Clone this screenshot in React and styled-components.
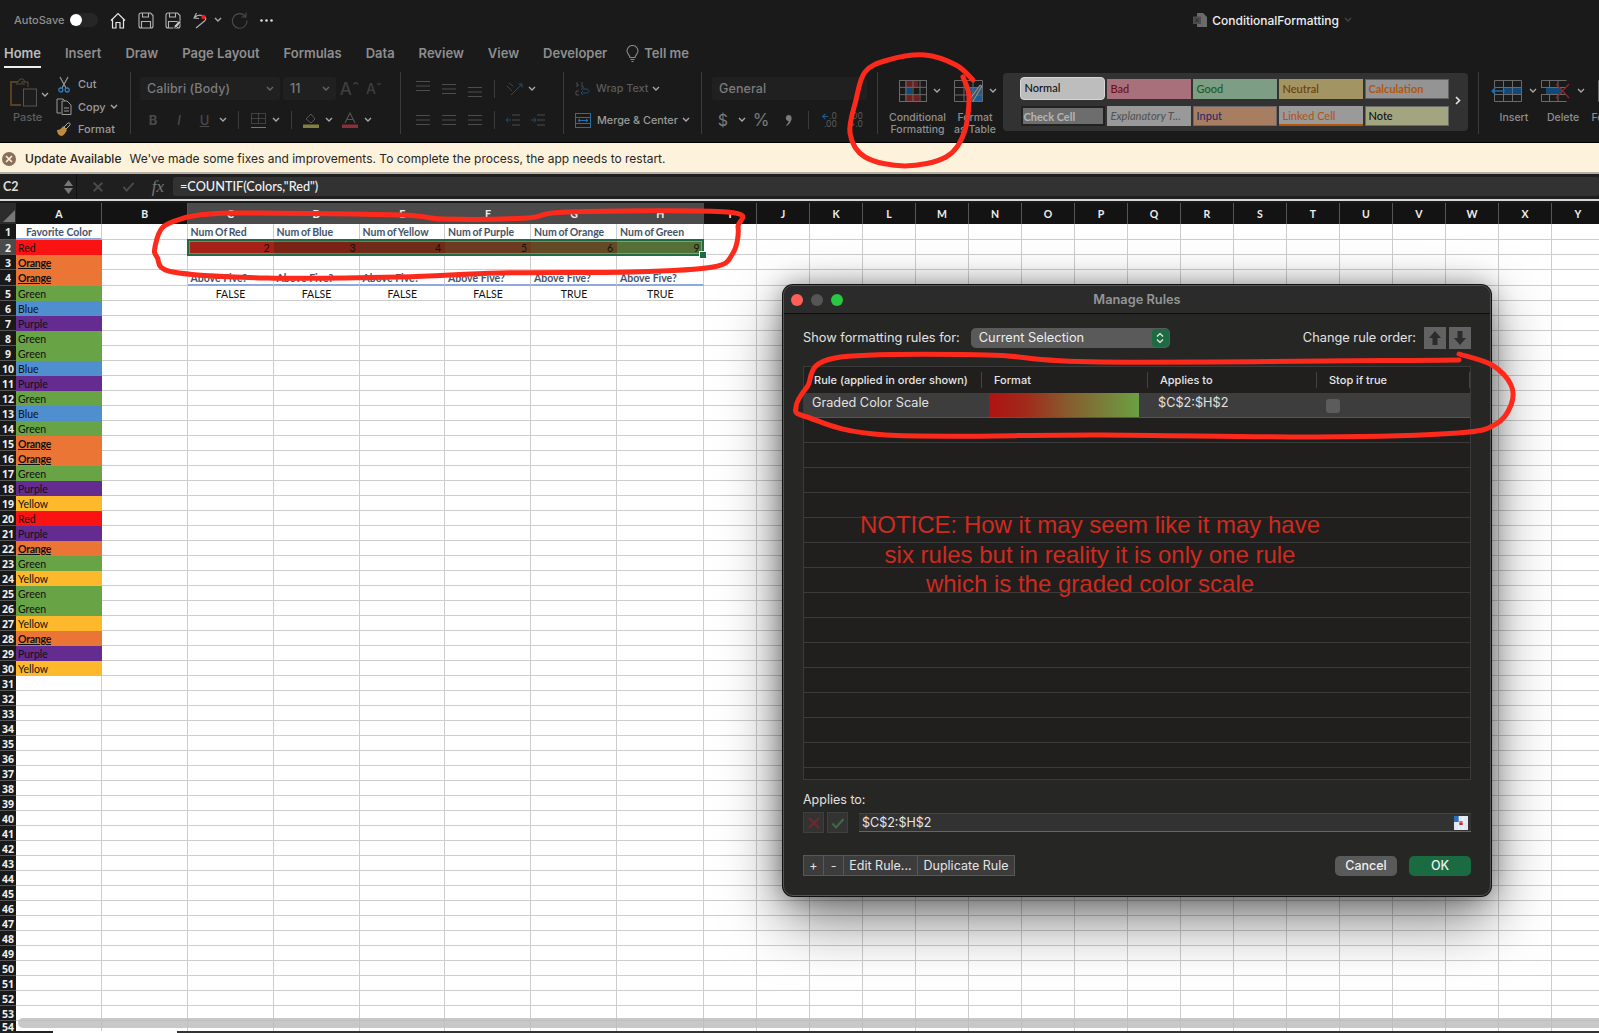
import React from 'react';
import styled, { createGlobalStyle } from 'styled-components';

const Global = createGlobalStyle`
  html, body { margin: 0; padding: 0; background: #fff; overflow: hidden; }
  * { box-sizing: border-box; }
`;
const UI = `Inter, "Liberation Sans", sans-serif`;
const CAL = `Lato, "Liberation Sans", sans-serif`;

const Page = styled.div`position: relative; width: 1599px; height: 1033px; overflow: hidden; display: flex; flex-direction: column; font-family: ${UI}; background: #1a1a1a;`;
const TitleBar = styled.div`height: 36px; flex: none; display: flex; align-items: center; padding: 4px 247px 0 14px;`;
const AutoSave = styled.span`font-size: 11px; font-weight: 500; color: #8f8f8f; width: 56px;`;
const Toggle = styled.div`position: relative; width: 28px; height: 14px; border-radius: 7px; background: #262626; margin-right: 11px;`;
const Knob = styled.div`position: absolute; left: 0; top: 1px; width: 12px; height: 12px; border-radius: 50%; background: #fff;`;
const QuickSlot = styled.div`width: ${p => p.$w}px; margin-left: ${p => p.$ml || 0}px; display: flex; justify-content: center; align-items: center; flex: none;`;
const DocTitle = styled.div`margin-left: auto; display: flex; align-items: center; gap: 5px; color: #eee; font-size: 12px; font-weight: 500;`;
const Tabs = styled.div`height: 34px; flex: none; display: flex; align-items: flex-start; padding: 8px 0 0 4px; gap: 24px;`;
const Tab = styled.div`position: relative; font-size: 13px; font-weight: 600; line-height: 18px; margin-left: ${p => p.$ml || 0}px; color: ${p => p.$on ? '#bdbdbd' : '#8e8e8e'}; display: flex; align-items: center; gap: 5px;
  ${p => p.$on && `&::after { content: ''; position: absolute; left: 0; right: 0; bottom: -6px; height: 2px; background: #eee; }`}`;
const Ribbon = styled.div`height: 72px; flex: none; display: flex; align-items: flex-start; padding-top: 2px; overflow: hidden;`;
const Group = styled.div`width: ${p => p.$w}px; height: 62px; flex: none; border-right: ${p => p.$last ? 'none' : '1px solid #3b3b3b'}; display: ${p => p.$row ? 'flex' : 'block'}; padding-left: ${p => p.$pl || 0}px;`;
const PasteCol = styled.div`width: 56px; flex: none; padding: 6px 0 0 10px; position: relative;`;
const PasteLabel = styled.div`font-size: 11px; font-weight: 500; color: #5f5f5f; margin-top: 3px; margin-left: 3px;`;
const ChevAt = styled.span`position: absolute; left: 41px; top: 20px;`;
const SideCol = styled.div`display: flex; flex-direction: column; padding-top: 1px;`;
const SideRow = styled.div`height: 22.4px; flex: none; display: flex; align-items: center; font-size: 11px; font-weight: 500; color: #9a9a9a; gap: 6px;`;
const SideChev = styled.span`margin-left: -2px;`;
const SideIcon = styled.div`width: 16px; display: flex; justify-content: center;`;
const Rows = styled.div`display: flex; flex-direction: column; gap: 9px; padding-top: 5px;`;
const ToolRow = styled.div`height: ${p => p.$h || 23}px; display: flex; align-items: center;`;
const Slot = styled.div`width: ${p => p.$w}px; flex: none; display: flex; justify-content: center; align-items: center; color: ${p => p.$c || '#4a4a4a'}; font-size: ${p => p.$fs || 13}px; font-weight: ${p => p.$fw || 500};`;
const VLine = styled.div`width: 1px; height: 18px; background: #3b3b3b;`;
const Combo = styled.div`width: ${p => p.$w}px; height: 23px; flex: none; background: #202020; border-radius: 3px; margin-right: ${p => p.$mr || 0}px; display: flex; align-items: center; justify-content: space-between; padding: 0 6px 0 7px; font-size: 12.5px; font-weight: 500; color: #7c7c7c; letter-spacing: .1px;`;
const ToolText = styled.div`font-size: 10.8px; font-weight: 500; color: ${p => p.$dim ? '#5a5a5a' : '#9a9a9a'}; margin: 0 4px 0 6px;`;
const DecStack = styled.div`font-size: 8.5px; line-height: 8.5px; color: #5c5c5c; text-align: right; font-weight: 400;`;
const DecArrow = styled.span`color: #1e5f94; font-weight: 700;`;
const LargeCol = styled.div`width: ${p => p.$w}px; flex: none; display: flex; flex-direction: column; align-items: center; padding-top: 8px; margin-left: ${p => p.$ml || 0}px;`;
const LargeIconRow = styled.div`display: flex; align-items: center; gap: 6px; height: 22px; padding-left: ${p => p.$pl || 0}px;`;
const LargeLabel = styled.div`font-size: 10.5px; font-weight: 500; line-height: 12px; color: #8f8f8f; text-align: center; margin-top: 10px; white-space: nowrap;`;
const Gallery = styled.div`width: 465.5px; height: 58px; margin: 1px 0 0 5.5px; background: #323232; border-radius: 4px; padding: 6px 0 0 18px; display: grid; grid-template-columns: repeat(5, 84px); grid-auto-rows: 20px; column-gap: 2px; row-gap: 7px; position: relative; flex: none;`;
const StyleCell = styled.div`font-family: ${CAL}; font-size: 11px; font-weight: ${p => p.$b ? 700 : 500}; font-style: ${p => p.$i ? 'italic' : 'normal'}; line-height: 18px; padding-left: ${p => p.$border ? 3 : 4}px; background: ${p => p.$bg}; color: ${p => p.$c}; border: ${p => p.$border || 'none'}; border-bottom: ${p => p.$bb || ''}; ${p => p.$border ? '' : 'line-height: 20px;'} white-space: nowrap; overflow: hidden;`;
const NormalCell = styled(StyleCell)`margin: -2px 0 -1px -1px; border: 1.5px solid #d6d6d6; border-radius: 4px; line-height: 20px; padding-left: 4px;`;
const CheckCell = styled(StyleCell)`padding-left: 1px;`;
const GalleryMore = styled.div`position: absolute; right: 7px; top: 23px; color: #ddd;`;
const Banner = styled.div`height: 32px; flex: none; background: #fdf3dd; border-top: 1px solid #000; border-bottom: 2px solid #b5afa3; display: flex; align-items: center; padding: 2px 0 0 2px; font-size: 12px; color: #262626; font-weight: 400;`;
const BannerDot = styled.div`width: 14px; height: 14px; border-radius: 50%; background: #8a6e55; display: flex; align-items: center; justify-content: center; color: #fdf3dd; margin-right: 9px;`;
const BannerStrong = styled.span`font-weight: 500; margin-right: 8px;`;
const FormulaBar = styled.div`height: 27px; flex: none; background: #1f1f1f; display: flex; align-items: center; border-bottom: 2px solid #d8d8d8;`;
const NameBox = styled.div`width: 77px; height: 100%; flex: none; display: flex; align-items: center; justify-content: space-between; padding: 0 3px 0 3px; color: #ddd; font-family: ${CAL}; font-size: 12.5px; font-weight: 700; border-right: 1px solid #111;`;
const Stepper = styled.div`display: flex; flex-direction: column; gap: 2px;`;
const FxSlot = styled.div`width: 30px; flex: none; margin-left: 6px; display: flex; justify-content: center; color: #777; font-family: "Liberation Serif", serif; font-style: italic; font-size: 17px;`;
const FormulaInput = styled.div`flex: 1; height: 19px; background: #323232; border-radius: 2px; color: #f2f2f2; font-family: ${CAL}; font-size: 12.7px; font-weight: 500; line-height: 19px; padding-left: 7px;`;
const Sheet = styled.div`position: relative; flex: 1; margin-top: 1px; background: #fff; overflow: hidden; border-top: 1px solid #1a1a1a;`;
const GridWrap = styled.div`display: grid; height: 100%; overflow: hidden; align-content: start;
  grid-template-columns: 16px 86px 85.5px 86px 86px 85.5px 86px 86px 86.5px repeat(17, 53px);
  grid-template-rows: 21px 16px 15px 15px 16px repeat(49, 15px); font-family: ${CAL};`;
const Corner = styled.div`background: #2c2c2c; position: relative; overflow: hidden; &::after { content: ''; position: absolute; right: 1px; bottom: 2px; border-style: solid; border-width: 0 0 12px 12px; border-color: transparent transparent #777 transparent; }`;
const ColHead = styled.div`background: ${p => p.$sel ? '#4b4b4b' : '#131313'}; color: #eee; display: flex; align-items: center; justify-content: center; padding-left: 1px; font-size: 10.5px; font-weight: 700; border-right: 1px solid ${p => p.$sel ? '#4b4b4b' : '#555'};`;
const RowHead = styled.div`background: ${p => p.$sel ? '#4b4b4b' : '#191919'}; color: #eee; display: flex; align-items: center; justify-content: center; overflow: hidden; padding-top: 1px; font-size: 10.5px; font-weight: 700; border-bottom: 1px solid #555; font-family: "Open Sans", sans-serif; white-space: nowrap;`;
const Cell = styled.div`background: ${p => p.$bg || '#fff'}; border-right: 1px solid ${p => p.$bg ? 'transparent' : '#cdcdcd'}; border-bottom: ${p => p.$bb || `1px solid ${p.$bg ? 'transparent' : '#cdcdcd'}`}; font-size: 10.5px; line-height: 14px; color: ${p => p.$c || '#111'}; font-weight: ${p => p.$w || 400}; text-align: ${p => p.$a || 'left'}; word-spacing: ${p => p.$ws || 0}px; letter-spacing: ${p => p.$ls || 0}px; padding: 1px ${p => p.$a === 'right' ? 3 : 2}px 0 ${p => p.$bg && p.$a !== 'right' ? 2 : 3}px; overflow: hidden; white-space: nowrap; text-decoration: ${p => p.$u ? 'underline' : 'none'};`;
const Selection = styled.div`position: absolute; left: 187px; top: 36px; width: 517px; height: 17px; border: 2px solid #1f6b43; box-shadow: inset 0 0 0 0.5px rgba(255,255,255,.6); pointer-events: none;`;
const Handle = styled.div`position: absolute; right: -4px; bottom: -4px; width: 6px; height: 6px; background: #1f6b43; outline: 1px solid #fff;`;
const ScrollThumb = styled.div`position: absolute; left: 18px; right: -10px; top: 815px; height: 10px; border-radius: 5px 0 0 5px; background: rgba(188,188,188,.82);`;
const BottomEdge = styled.div`position: absolute; left: 0; right: 0; bottom: 0; height: 2px; display: flex;`;
const EdgeBar = styled.div`height: 2px; background: ${p => p.$c}; width: ${p => p.$w ? p.$w + 'px' : 'auto'}; flex: ${p => p.$w ? 'none' : 1};`;

const Dialog = styled.div`position: absolute; left: 783px; top: 285px; width: 708px; height: 611px; background: #262625; border-radius: 10px; border: 1px solid #555; box-shadow: 0 0 0 1px #111, 0 22px 60px rgba(0,0,0,.55), 0 0 24px rgba(0,0,0,.35); display: flex; flex-direction: column; color: #e2e2e2; font-size: 12.8px;`;
const DialogTitle = styled.div`position: relative; height: 28px; flex: none; display: flex; align-items: center; justify-content: center; border-bottom: 1px solid #0d0d0d; background: #2b2b2b; border-radius: 10px 10px 0 0; color: #959595; font-size: 12.8px; font-weight: 600;`;
const Lights = styled.div`position: absolute; left: 7px; top: 8px; display: flex; gap: 8px;`;
const Light = styled.div`width: 12px; height: 12px; border-radius: 50%; background: ${p => p.$c};`;
const DialogBody = styled.div`flex: 1; padding: 12px 19px 0 19px; display: flex; flex-direction: column; position: relative;`;
const TopRow = styled.div`height: 23px; display: flex; align-items: center; flex: none;`;
const SelectBox = styled.div`width: 199px; height: 20px; margin-left: 11px; background: #5a5a5a; border-radius: 5px; display: flex; align-items: center; justify-content: space-between; padding-left: 8px; color: #eee; font-size: 12.8px; overflow: hidden; font-weight: 400;`;
const SelectArrow = styled.div`width: 17px; height: 18px; margin-right: 1px; border-radius: 4px; background: #1d6b41; display: flex; align-items: center; justify-content: center;`;
const OrderLabel = styled.div`margin-left: auto; margin-right: 8px;`;
const OrderBtn = styled.div`width: 22px; height: 22px; background: #626262; margin-left: ${p => p.$ml || 0}px; display: flex; align-items: center; justify-content: center;`;
const RuleTable = styled.div`height: 414px; margin-top: 17px; border: 1px solid #3a3a3a; background: #201f1e; overflow: hidden; flex: none;`;
const RuleHead = styled.div`height: 26px; display: grid; grid-template-columns: 178px 166px 169px 153px; align-items: center; font-size: 11px; font-weight: 500; color: #e6e6e6;`;
const RuleHeadCell = styled.div`height: 16px; line-height: 16px; padding-left: ${p => p.$pl}px; border-right: 1px solid #444;`;
const RuleRow = styled.div`height: 25px; background: #3d3d3d; display: grid; grid-template-columns: 185px 150px 186.5px 1fr; align-items: center; border-bottom: 1px solid #555; font-size: 12.7px;`;
const RuleCell = styled.div`padding-left: ${p => p.$pl}px; padding-bottom: 5px;`;
const GradientBar = styled.div`height: 24px; background: linear-gradient(90deg, #b01212 0%, #a02a1c 25%, #85602f 55%, #6ba043 100%);`;
const RuleCheck = styled.div`width: 14px; height: 14px; background: #5c5c5c; border-radius: 3px; margin: 2px 0 0 0;`;
const EmptyRow = styled.div`height: 25px; border-bottom: 1px solid #3a3a3a;`;
const AppliesLabel = styled.div`margin-top: 13px; line-height: 14px; font-size: 12.5px;`;
const AppliesRow = styled.div`display: flex; align-items: center; height: 21px; margin-top: 5px; gap: 3px;`;
const SquareBtn = styled.div`width: 21px; height: 21px; background: #333; border: 1px solid #3f3f3f; display: flex; align-items: center; justify-content: center;`;
const RangeInput = styled.div`flex: 1; height: 19px; margin-left: 8px; background: #323232; border-bottom: 1px solid #666; border-top: 1px solid #444; padding: 0 3px; display: flex; align-items: center; justify-content: space-between; font-size: 12.5px; color: #e6e6e6;`;
const ActionRow = styled.div`display: flex; align-items: center; margin-top: 22px; height: 21px;`;
const ActionBtn = styled.div`height: 21px; width: ${p => p.$w}px; background: #3c3c3c; border: 1px solid #585858; margin-left: ${p => p.$first ? 0 : -1}px; display: flex; align-items: center; justify-content: center; font-size: 12.5px; color: #e4e4e4;`;
const PushBtn = styled.div`height: 20px; width: 62px; border-radius: 5px; background: ${p => p.$bg}; margin-left: ${p => p.$ml}px; display: flex; align-items: center; justify-content: center; font-size: 12.5px; font-weight: 500; color: #eee;`;
const Notice = styled.div`position: absolute; left: 56px; top: 196px; width: 500px; text-align: center; font-family: "Liberation Sans", sans-serif; font-size: 24px; line-height: 29.5px; color: #cf2a1e; pointer-events: none;`;
const Scribble = styled.svg`position: absolute; left: 0; top: 0; pointer-events: none;`;

const Ico = styled.svg`display: block; flex: none;`;
const Chev = ({ c = '#a8a8a8' }) => <Ico width="8" height="6" viewBox="0 0 8 6"><path d="M1 1l3 3 3-3" fill="none" stroke={c} strokeWidth="1.4" /></Ico>;
const Lines = ({ y = 0 }) => <Ico width="14" height="16" viewBox="0 0 14 16">{[0, 1, 2].map(i => <path key={i} d={`M0 ${y + i * 4.5 + .5}h14`} stroke="#4d4d4d" strokeWidth="1" />)}</Ico>;
const Indent = ({ dir }) => <Ico width="14" height="14" viewBox="0 0 14 14"><path d="M6 2h8M6 7h8M6 12h8" stroke="#4a4a4a" /><path d={dir === 'l' ? 'M5 7H0m2-2.5L0 7l2 2.5' : 'M0 7h5m-2-2.5L5 7 3 9.5'} stroke="#1e4f78" fill="none" /></Ico>;
const HomeIco = () => <Ico width="16" height="17" viewBox="0 0 16 17"><path d="M1 8.5L8 1.5l7 7M2.5 7.5V16h3.5v-5.5h4V16h3.5V7.5" fill="none" stroke="#e6e6e6" strokeWidth="1.2" /></Ico>;
const SaveIco = ({ pen }) => <Ico width="16" height="17" viewBox="0 0 16 17"><path d="M1 3Q1 1 3 1H12.500L15 3.500V14Q15 16 13 16H3Q1 16 1 14Z" fill="none" stroke="#b5b5b5" strokeWidth="1.1" /><path d="M4.500 1v4h6V1M3.500 16v-6.500h9V16" fill="none" stroke="#b5b5b5" strokeWidth="1.1" />{pen && <path d="M8.500 16.500l1-3 4.500-5 2 2-4.500 5z" fill="#c9c9c9" stroke="#1a1a1a" strokeWidth=".8" />}</Ico>;
const UndoIco = () => <Ico width="15" height="17" viewBox="0 0 15 17"><path d="M3.500 1L1 6l5 .5M1.500 5.500C4 3 8 2.500 11.500 4.500 13.500 6 13 7.500 11.500 9L3 16" fill="none" stroke="#b5b5b5" strokeWidth="1.1" /><circle cx="10.500" cy="5" r="2.200" fill="#ee1c1c" /></Ico>;
const RedoIco = () => <Ico width="17" height="17" viewBox="0 0 17 17"><path d="M14.500 4.500A7.300 7.300 0 1 0 16 8.500M15 .5v4.500h-4.500" fill="none" stroke="#4a4a4a" strokeWidth="1.1" /></Ico>;
const Dots = () => <Ico width="13" height="3" viewBox="0 0 13 3"><circle cx="1.500" cy="1.500" r="1.300" fill="#ddd" /><circle cx="6.500" cy="1.500" r="1.300" fill="#ddd" /><circle cx="11.500" cy="1.500" r="1.300" fill="#ddd" /></Ico>;
const DocIco = () => <Ico width="14" height="14" viewBox="0 0 14 14"><path d="M4 0h6l4 4v10H4z" fill="#6a6a6a" /><rect x="0" y="3.500" width="8" height="7.500" fill="#4d4d4d" /><path d="M2 5.500l4 3.500M6 5.500l-4 3.500" stroke="#2a2a2a" /></Ico>;
const BulbIco = () => <Ico width="13" height="17" viewBox="0 0 13 17"><path d="M4 12.500C4 10 1 9 1 6a5.500 5.500 0 0 1 11 0c0 3-3 4-3 6.500zM4.500 14.500h4M5.500 16.500h2" fill="none" stroke="#8a8a8a" strokeWidth="1.100" /></Ico>;
const PasteIco = () => <Ico width="30" height="29" viewBox="0 0 30 29"><path d="M8 4H1v23h10" fill="none" stroke="#5a4020" strokeWidth="2" /><path d="M18 9V4h-7M8 4l2-3h3l2 3M6 6h9" fill="none" stroke="#5a4a38" strokeWidth="1" /><rect x="13.500" y="11" width="13" height="17" fill="#1d1d1d" stroke="#555" /></Ico>;
const CutIco = () => <Ico width="12" height="17" viewBox="0 0 12 17"><path d="M2 1l6 11M10 1L4 12" stroke="#9a9a9a" strokeWidth="1.200" /><circle cx="2.800" cy="14" r="2" fill="none" stroke="#2e7fc2" strokeWidth="1.300" /><circle cx="9.200" cy="14" r="2" fill="none" stroke="#2e7fc2" strokeWidth="1.300" /></Ico>;
const CopyIco = () => <Ico width="16" height="17" viewBox="0 0 16 17"><path d="M5 15H1V1h6l2 2" fill="none" stroke="#9a9a9a" /><path d="M6 3h5l4 4v9.500H6zM8 10h5M8 13h5" fill="#1a1a1a" stroke="#9a9a9a" /></Ico>;
const BrushIco = () => <Ico width="16" height="16" viewBox="0 0 16 16"><path d="M8 6l4-4c1-1 3 1 2 2l-4 4z" fill="#1a1a1a" stroke="#aaa" /><path d="M1 9c3 0 5-2 6-4l4 4c-1 2-3 5-5 6-3 0-5-3-5-6z" fill="#c08a3c" /></Ico>;
const BorderIco = () => <Ico width="15" height="15" viewBox="0 0 15 15"><path d="M.5.5h14v10h-14zM7.500.5v10M.5 5.500h14" fill="none" stroke="#666" strokeDasharray="1 1" /><path d="M0 14.500h15" stroke="#777" /></Ico>;
const FillIco = () => <Ico width="16" height="16" viewBox="0 0 16 16"><path d="M3 7l5-5 4 5-4 4z" fill="none" stroke="#555" /><rect x="0" y="12.500" width="16" height="3.500" fill="#847f3e" /></Ico>;
const AIco = () => <Ico width="16" height="16" viewBox="0 0 16 16"><path d="M3 11L8 1l5 10M5 7.500h6" fill="none" stroke="#555" strokeWidth="1.100" /><rect x="0" y="12.500" width="16" height="3.500" fill="#8e2f35" /></Ico>;
const OrientIco = () => <Ico width="17" height="15" viewBox="0 0 17 15"><path d="M1 5l5 5M3 2l4 3" stroke="#444" fill="none" /><path d="M5 14L16 3m-3.500 0H16v3.500" stroke="#1e4f78" fill="none" /></Ico>;
const WrapIco = () => <Ico width="15" height="16" viewBox="0 0 15 16"><path d="M2 6V1m0 3h2M7 1v5h2" stroke="#4a4a4a" fill="none" /><path d="M8 12h3c4 0 4-4 0-4H6m2 2-2 2 2 2" stroke="#1e4f78" fill="none" /><path d="M4 10H1v4h3" stroke="#4a4a4a" fill="none" /></Ico>;
const MergeIco = () => <Ico width="16" height="15" viewBox="0 0 16 15"><rect x=".5" y=".5" width="15" height="14" fill="none" stroke="#2a6da6" /><path d="M.5 4.500h15M.5 10.500h15M3 7.500h10M3 7.500l2-1.500m-2 1.500L5 9m8-1.500L11 6m2 1.500L11 9" stroke="#2a6da6" fill="none" /></Ico>;
const CommaIco = () => <Ico width="7" height="11" viewBox="0 0 7 11"><path d="M3.500 0C6 0 7 2 6.500 4.500 6 7 4 9.500 1.500 11L1 10.200C2.500 9 3.500 7.500 3.700 6 2 6 .8 4.800.8 3.200.8 1.300 2 0 3.500 0z" fill="#7a7a7a" /></Ico>;
const GridBase = ({ w, h, cols, rows, children }) => <Ico width={w} height={h} viewBox={`0 0 ${w} ${h}`}>{children}<rect x=".5" y=".5" width={w - 1} height={h - 1} fill="none" stroke="#6a6a6a" />{Array.from({ length: cols - 1 }, (_, i) => <path key={i} d={`M${(w / cols) * (i + 1)} 0v${h}`} stroke="#6a6a6a" />)}{Array.from({ length: rows - 1 }, (_, i) => <path key={i} d={`M0 ${(h / rows) * (i + 1)}h${w}`} stroke="#6a6a6a" />)}</Ico>;
const CondIco = () => <GridBase w={28} h={22} cols={4} rows={3}><rect x="6" y="0" width="13" height="7" fill="#6e1f22" /><rect x="6" y="7" width="7" height="8" fill="#0f4a7a" /><rect x="6" y="15" width="14" height="7" fill="#6e1f22" /></GridBase>;
const TableIco = () => <Ico width="29" height="22" viewBox="0 0 29 22"><rect x="14" y="8" width="14" height="14" fill="#1a5c96" /><path d="M.5.5h28v21H.5zM10 0v22M19 0v22M0 7.500h29M0 15h29" fill="none" stroke="#6a6a6a" /><path d="M14 22l12-17 2 1-10 17z" fill="#555" stroke="#999" /></Ico>;
const InsertIco = () => <Ico width="32" height="22" viewBox="0 0 32 22"><rect x="12" y="7.500" width="19" height="7.500" fill="#0f4a7a" /><path d="M3.500.5h27v21h-27zM12.500 0v22M21.500 0v22M3 7.500h28M3 14.500h28" fill="none" stroke="#6a6a6a" /><path d="M14 11H1m4-4l-4 4 4 4" fill="none" stroke="#1e6cab" strokeWidth="1.300" /></Ico>;
const DeleteIco = () => <Ico width="30" height="22" viewBox="0 0 30 22"><rect x="5" y="7.500" width="16" height="7.500" fill="#0f4a7a" /><path d="M.5.5h25M.5 21.500h25M.5.5v7M.5 14.500v7M8.500 0v7.500M17 0v7.500M8.500 14.500v7M17 14.500v7M0 7.500h25M0 14.500h25" fill="none" stroke="#6a6a6a" /><path d="M15 4l13 14M28 4L15 18" stroke="#8e2626" strokeWidth="1.300" /></Ico>;
const PartialIco = () => <Ico width="22" height="22" viewBox="0 0 22 22"><path d="M.5.5h22M.5 21.500h22M.5.5v21M9 0v22M0 7.500h22M0 14.500h22" fill="none" stroke="#6a6a6a" /></Ico>;
const BadgeX = () => <Ico width="8" height="8" viewBox="0 0 8 8"><path d="M1 1l6 6M7 1L1 7" stroke="#fdf3dd" strokeWidth="1.600" /></Ico>;
const ArrowTri = ({ up, c = '#777' }) => <Ico width="9" height="6" viewBox="0 0 9 6"><path d={up ? 'M4.500 0L9 6H0z' : 'M4.500 6L9 0H0z'} fill={c} /></Ico>;
const UpDown = () => <Ico width="8" height="12" viewBox="0 0 8 12"><path d="M1 4.500L4 1.500l3 3M1 7.500l3 3 3-3" fill="none" stroke="#eee" strokeWidth="1.200" /></Ico>;
const CrossIco = ({ c = '#444', s = 14 }) => <Ico width={s} height={s} viewBox="0 0 14 14"><path d="M2 2l10 10M12 2L2 12" stroke={c} strokeWidth="2.400" /></Ico>;
const CheckIco = ({ c = '#444', s = 14 }) => <Ico width={s} height={s} viewBox="0 0 14 14"><path d="M1.500 7.500l3.500 4L12.500 3" fill="none" stroke={c} strokeWidth="2" /></Ico>;
const BigArrow = ({ up }) => <Ico width="12" height="14" viewBox="0 0 12 14"><path d={up ? 'M6 0l6 7H8.500v7h-5V7H0z' : 'M6 14l6-7H8.500V0h-5v7H0z'} fill="#2c2c2c" /></Ico>;
const RangeIco = () => <Ico width="14" height="14" viewBox="0 0 14 14"><rect width="14" height="14" fill="#dfe8f3" /><rect width="5" height="6" fill="#2f6fb5" /><rect x="5" y="5" width="4" height="4" fill="#c7272a" /><path d="M5 6h9M5 0v14M9 0v14" stroke="#fff" strokeWidth=".6" /></Ico>;

const letters = 'ABCDEFGHIJKLMNOPQRSTUVWXY'.split('');
const favs = ['Red', 'Orange', 'Orange', 'Green', 'Blue', 'Purple', 'Green', 'Green', 'Blue', 'Purple', 'Green', 'Blue', 'Green', 'Orange', 'Orange', 'Green', 'Purple', 'Yellow', 'Red', 'Purple', 'Orange', 'Green', 'Yellow', 'Green', 'Green', 'Yellow', 'Orange', 'Purple', 'Yellow'];
const favColors = { Red: '#fb1313', Orange: '#ea7535', Green: '#68a345', Blue: '#4f8fd0', Purple: '#642c90', Yellow: '#feb82b' };
const heads = ['Num Of Red', 'Num of Blue', 'Num of Yellow', 'Num of Purple', 'Num of Orange', 'Num of Green'];
const scale = [['2', '#a72118'], ['3', '#7a2214'], ['4', '#702b18'], ['5', '#6d3a20'], ['6', '#644925'], ['9', '#566f35']];
const tests = ['FALSE', 'FALSE', 'FALSE', 'FALSE', 'TRUE', 'TRUE'];

function gridCell(r, c) {
  const key = `${r}-${c}`;
  if (c === 0) {
    if (r === 1) return <Cell key={key} $a="center" $w={700} $c="#44546a" $bb="2px solid #8ea9db">Favorite Color</Cell>;
    const f = favs[r - 2];
    if (f) return <Cell key={key} $bg={favColors[f]} $u={f === 'Orange'} $w={f === 'Orange' ? 700 : 400} $ls={f === 'Orange' ? -0.25 : 0}>{f}</Cell>;
  }
  if (c >= 2 && c <= 7) {
    const i = c - 2;
    if (r === 1) return <Cell key={key} $w={700} $c="#44546a" $ws={-0.8}>{heads[i]}</Cell>;
    if (r === 2) return <Cell key={key} $bg={scale[i][1]} $a="right" $c="#111">{scale[i][0]}</Cell>;
    if (r === 4) return <Cell key={key} $w={700} $c="#44546a" $bb="2px solid #8ea9db">Above Five?</Cell>;
    if (r === 5) return <Cell key={key} $a="center">{tests[i]}</Cell>;
  }
  return <Cell key={key} />;
}

const smooth = pts => {
  let d = `M${pts[0][0]} ${pts[0][1]}`;
  for (let i = 0; i < pts.length - 1; i++) {
    const p0 = pts[i - 1] || pts[i], p1 = pts[i], p2 = pts[i + 1], p3 = pts[i + 2] || p2;
    d += ` C${p1[0] + (p2[0] - p0[0]) / 6} ${p1[1] + (p2[1] - p0[1]) / 6} ${p2[0] - (p3[0] - p1[0]) / 6} ${p2[1] - (p3[1] - p1[1]) / 6} ${p2[0]} ${p2[1]}`;
  }
  return d;
};
const circleA = [[973, 80], [956, 65], [925, 55], [888, 60], [865, 72], [856, 100], [850, 133], [865, 157], [905, 166], [946, 157], [964, 133], [969, 97], [963, 77]];
const circleB = [[187, 217], [233, 213], [400, 215], [443, 219], [527, 218], [567, 212], [727, 212], [738, 227], [733, 253], [713, 267], [633, 272], [500, 273], [400, 277], [267, 278], [173, 272], [157, 257], [155, 247], [163, 227], [187, 217]];
const circleC = [[1459, 354], [1492, 365], [1511, 385], [1511, 405], [1496, 424], [1458, 433], [1317, 437], [1101, 435], [886, 435], [807, 417], [796, 407], [807, 387], [835, 358], [987, 355], [1101, 362], [1459, 360]];

export default function App() {
  return (
    <Page>
      <Global />
      <TitleBar>
        <AutoSave>AutoSave</AutoSave>
        <Toggle><Knob /></Toggle>
        <QuickSlot $w={18}><HomeIco /></QuickSlot>
        <QuickSlot $w={37}><SaveIco /></QuickSlot>
        <QuickSlot $w={18}><SaveIco pen /></QuickSlot>
        <QuickSlot $w={36}><UndoIco /></QuickSlot>
        <QuickSlot $w={6} $ml={-3}><Chev /></QuickSlot>
        <QuickSlot $w={36}><RedoIco /></QuickSlot>
        <QuickSlot $w={18}><Dots /></QuickSlot>
        <DocTitle><DocIco />ConditionalFormatting<Chev c="#444" /></DocTitle>
      </TitleBar>
      <Tabs>
        {['Home', 'Insert', 'Draw', 'Page Layout', 'Formulas', 'Data', 'Review', 'View', 'Developer'].map((t, i) => <Tab key={t} $on={i === 0}>{t}</Tab>)}
        <Tab $ml={-5}><BulbIco />Tell me</Tab>
      </Tabs>
      <Ribbon>
        <Group $w={131} $row>
          <PasteCol><PasteIco /><ChevAt><Chev /></ChevAt><PasteLabel>Paste</PasteLabel></PasteCol>
          <SideCol>
            <SideRow><SideIcon><CutIco /></SideIcon>Cut</SideRow>
            <SideRow><SideIcon><CopyIco /></SideIcon>Copy<SideChev><Chev /></SideChev></SideRow>
            <SideRow><SideIcon><BrushIco /></SideIcon>Format</SideRow>
          </SideCol>
        </Group>
        <Group $w={270} $pl={9}>
          <Rows>
            <ToolRow>
              <Combo $w={140} $mr={3}>Calibri (Body)<Chev c="#666" /></Combo>
              <Combo $w={53}>11<Chev c="#666" /></Combo>
              <Slot $w={27} $fs={17} $c="#3f3f3f">Aˆ</Slot>
              <Slot $w={22} $fs={14} $c="#3f3f3f">Aˇ</Slot>
            </ToolRow>
            <ToolRow $h={22}>
              <Slot $w={26} $fw={700}>B</Slot>
              <Slot $w={26}><em>I</em></Slot>
              <Slot $w={25}><u>U</u></Slot>
              <Slot $w={12}><Chev /></Slot>
              <Slot $w={18}><VLine /></Slot>
              <Slot $w={22}><BorderIco /></Slot>
              <Slot $w={14}><Chev /></Slot>
              <Slot $w={16}><VLine /></Slot>
              <Slot $w={24}><FillIco /></Slot>
              <Slot $w={12}><Chev /></Slot>
              <Slot $w={30}><AIco /></Slot>
              <Slot $w={6}><Chev /></Slot>
            </ToolRow>
          </Rows>
        </Group>
        <Group $w={163} $pl={9}>
          <Rows>
            <ToolRow>
              <Slot $w={26}><Lines y={0} /></Slot>
              <Slot $w={26}><Lines y={3} /></Slot>
              <Slot $w={26}><Lines y={6} /></Slot>
              <Slot $w={12}><VLine /></Slot>
              <Slot $w={28}><OrientIco /></Slot>
              <Slot $w={8}><Chev /></Slot>
            </ToolRow>
            <ToolRow $h={22}>
              <Slot $w={26}><Lines y={3} /></Slot>
              <Slot $w={26}><Lines y={3} /></Slot>
              <Slot $w={26}><Lines y={3} /></Slot>
              <Slot $w={12}><VLine /></Slot>
              <Slot $w={25}><Indent dir="l" /></Slot>
              <Slot $w={25}><Indent dir="r" /></Slot>
            </ToolRow>
          </Rows>
        </Group>
        <Group $w={138} $pl={11}>
          <Rows>
            <ToolRow><WrapIco /><ToolText $dim>Wrap Text</ToolText><Chev /></ToolRow>
            <ToolRow $h={22}><MergeIco /><ToolText>Merge &amp; Center</ToolText><Chev /></ToolRow>
          </Rows>
        </Group>
        <Group $w={176} $pl={10}>
          <Rows>
            <ToolRow><Combo $w={155}>General</Combo></ToolRow>
            <ToolRow $h={22}>
              <Slot $w={22} $fs={16} $fw={400} $c="#7a7a7a">$</Slot>
              <Slot $w={16}><Chev /></Slot>
              <Slot $w={22} $fs={17} $fw={400} $c="#7a7a7a">%</Slot>
              <Slot $w={32}><CommaIco /></Slot>
              <Slot $w={8}><VLine /></Slot>
              <Slot $w={34}><DecStack><DecArrow>←</DecArrow>.0<br />.00</DecStack></Slot>
              <Slot $w={18}><DecStack>.00<br /><DecArrow>→</DecArrow>.0</DecStack></Slot>
            </ToolRow>
          </Rows>
        </Group>
        <Group $w={601} $row>
          <LargeCol $w={71} $ml={4}>
            <LargeIconRow $pl={4}><CondIco /><Chev /></LargeIconRow>
            <LargeLabel>Conditional<br />Formatting</LargeLabel>
          </LargeCol>
          <LargeCol $w={44}>
            <LargeIconRow><TableIco /><Chev /></LargeIconRow>
            <LargeLabel>Format<br />as Table</LargeLabel>
          </LargeCol>
          <Gallery>
            <NormalCell $bg="#bdbdbd" $c="#111">Normal</NormalCell>
            <StyleCell $bg="#a7707a" $c="#6c0f1c">Bad</StyleCell>
            <StyleCell $bg="#7d9d84" $c="#1e5a25">Good</StyleCell>
            <StyleCell $bg="#a39464" $c="#6b3e05">Neutral</StyleCell>
            <StyleCell $bg="#949494" $c="#b5560f" $b $border="1.500px solid #626262">Calculation</StyleCell>
            <CheckCell $bg="#6d6d6d" $c="#b5b5b5" $b $border="2px double #222">Check Cell</CheckCell>
            <StyleCell $bg="#999" $c="#555" $i>Explanatory T...</StyleCell>
            <StyleCell $bg="#a87e62" $c="#2a2a66" $border="1.500px solid #6a6a6a">Input</StyleCell>
            <StyleCell $bg="#9a9a9a" $c="#b5560f" $bb="2px solid #b5560f">Linked Cell</StyleCell>
            <StyleCell $bg="#a3a480" $c="#111" $border="1.500px solid #6a6a6a">Note</StyleCell>
            <GalleryMore><Ico width="6" height="9" viewBox="0 0 6 9"><path d="M1 1l3.500 3.500L1 8" fill="none" stroke="#e6e6e6" strokeWidth="1.600" /></Ico></GalleryMore>
          </Gallery>
        </Group>
        <Group $w={130} $row $last>
          <LargeCol $w={52} $ml={9}>
            <LargeIconRow><InsertIco /><Chev /></LargeIconRow>
            <LargeLabel>Insert</LargeLabel>
          </LargeCol>
          <LargeCol $w={46}>
            <LargeIconRow><DeleteIco /><Chev /></LargeIconRow>
            <LargeLabel>Delete</LargeLabel>
          </LargeCol>
          <LargeCol $w={22} $ml={12}>
            <LargeIconRow><PartialIco /></LargeIconRow>
            <LargeLabel>Format</LargeLabel>
          </LargeCol>
        </Group>
      </Ribbon>
      <Banner>
        <BannerDot><BadgeX /></BannerDot>
        <BannerStrong>Update Available</BannerStrong>
        We've made some fixes and improvements. To complete the process, the app needs to restart.
      </Banner>
      <FormulaBar>
        <NameBox>C2<Stepper><ArrowTri up /><ArrowTri /></Stepper></NameBox>
        <Slot $w={42}><CrossIco c="#4a4a4a" s={12} /></Slot>
        <Slot $w={18}><CheckIco c="#4a4a4a" s={13} /></Slot>
        <FxSlot>fx</FxSlot>
        <FormulaInput>=COUNTIF(Colors,"Red")</FormulaInput>
      </FormulaBar>
      <Sheet>
        <GridWrap>
          <Corner />
          {letters.map((l, i) => <ColHead key={l} $sel={i >= 2 && i <= 7}>{l}</ColHead>)}
          {Array.from({ length: 54 }, (_, ri) => (
            <React.Fragment key={ri}>
              <RowHead $sel={ri === 1}>{ri + 1}</RowHead>
              {letters.map((_, c) => gridCell(ri + 1, c))}
            </React.Fragment>
          ))}
        </GridWrap>
        <Selection><Handle /></Selection>
        <ScrollThumb />
        <BottomEdge>
          <EdgeBar $w={53} $c="#222" /><EdgeBar $w={124} $c="#fff" /><EdgeBar $c="#333" />
        </BottomEdge>
      </Sheet>
      <Dialog>
        <DialogTitle>
          <Lights><Light $c="#ff5f57" /><Light $c="#555" /><Light $c="#28c840" /></Lights>
          Manage Rules
        </DialogTitle>
        <DialogBody>
          <TopRow>
            Show formatting rules for:
            <SelectBox>Current Selection<SelectArrow><UpDown /></SelectArrow></SelectBox>
            <OrderLabel>Change rule order:</OrderLabel>
            <OrderBtn><BigArrow up /></OrderBtn>
            <OrderBtn $ml={3}><BigArrow /></OrderBtn>
          </TopRow>
          <RuleTable>
            <RuleHead>
              <RuleHeadCell $pl={10}>Rule (applied in order shown)</RuleHeadCell>
              <RuleHeadCell $pl={12}>Format</RuleHeadCell>
              <RuleHeadCell $pl={12}>Applies to</RuleHeadCell>
              <RuleHeadCell $pl={12}>Stop if true</RuleHeadCell>
            </RuleHead>
            <RuleRow>
              <RuleCell $pl={8}>Graded Color Scale</RuleCell>
              <GradientBar />
              <RuleCell $pl={19}>$C$2:$H$2</RuleCell>
              <RuleCheck />
            </RuleRow>
            {Array.from({ length: 14 }, (_, i) => <EmptyRow key={i} />)}
          </RuleTable>
          <AppliesLabel>Applies to:</AppliesLabel>
          <AppliesRow>
            <SquareBtn><CrossIco c="#6a2a2a" /></SquareBtn>
            <SquareBtn><CheckIco c="#3f6b43" /></SquareBtn>
            <RangeInput>$C$2:$H$2<RangeIco /></RangeInput>
          </AppliesRow>
          <ActionRow>
            <ActionBtn $w={21} $first>+</ActionBtn>
            <ActionBtn $w={21}>-</ActionBtn>
            <ActionBtn $w={75}>Edit Rule...</ActionBtn>
            <ActionBtn $w={98}>Duplicate Rule</ActionBtn>
            <PushBtn $bg="#5a5a5a" $ml={320}>Cancel</PushBtn>
            <PushBtn $bg="#1b6b42" $ml={12}>OK</PushBtn>
          </ActionRow>
          <Notice>NOTICE: How it may seem like it may have<br />six rules but in reality it is only one rule<br />which is the graded color scale</Notice>
        </DialogBody>
      </Dialog>
      <Scribble width="1599" height="1033" viewBox="0 0 1599 1033">
        {[circleA, circleB, circleC].map((c, i) => <path key={i} d={smooth(c)} fill="none" stroke="#fd2a1c" strokeWidth="5" strokeLinecap="round" strokeLinejoin="round" />)}
      </Scribble>
    </Page>
  );
}
